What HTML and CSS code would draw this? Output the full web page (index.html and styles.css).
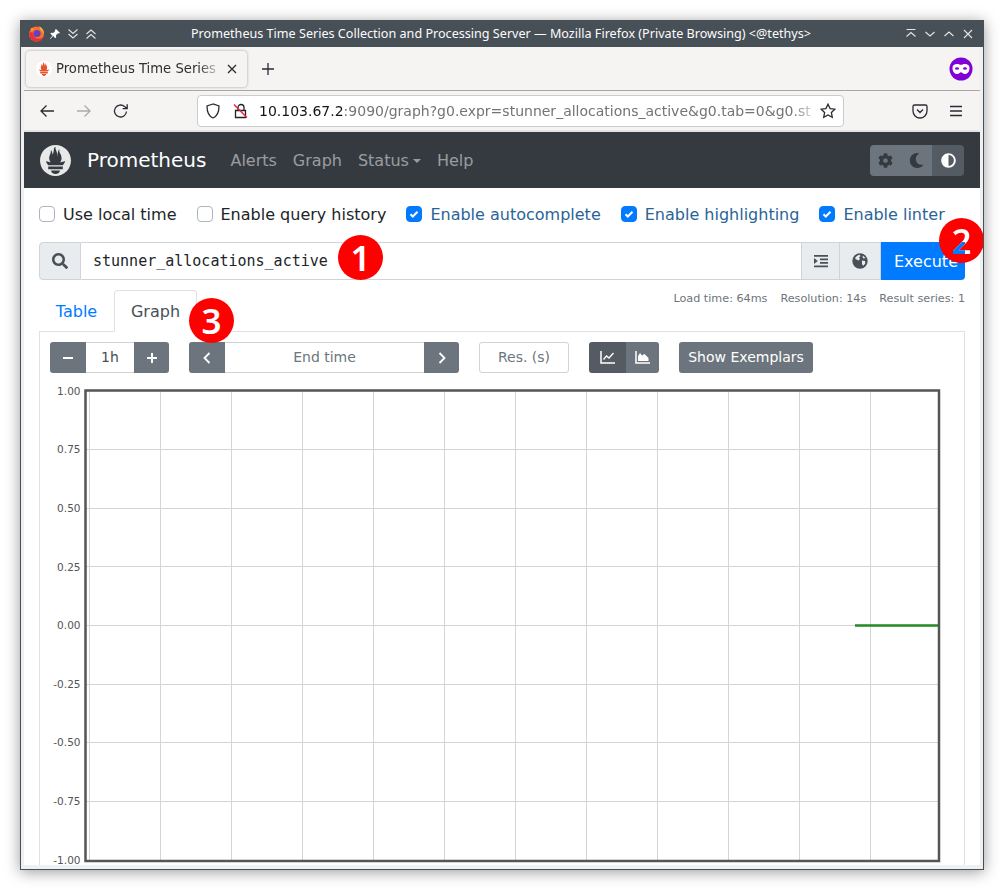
FILE: index.html
```html
<!DOCTYPE html>
<html>
<head>
  <title>Prometheus Time Series Collection and Processing Server</title>
  <link rel="stylesheet" href="styles.css">
</head>
<body>
  <div class="window">
    <!-- window manager title bar -->
    <div class="titlebar">
      <div class="title-left">
        <svg class="ff-logo" width="17" height="17" viewBox="0 0 17 17">
          <circle cx="8.500" cy="9" r="7.500" fill="#f7722a"/>
          <path d="M10.500.8c3.500 1.700 6 4.800 5.500 9-.7-2.500-2-4.200-3.800-5 .1-1.600-.6-3-1.700-4z" fill="#fbb03b"/>
          <path d="M2.500 3.500C3.500 3 4.500 3 5.500 3.500L4 6z" fill="#fbb03b"/>
          <path d="M1 8c.2 4.500 3.300 8.500 7.500 8.500 3.400 0 6-2 7-5-2 2.300-5.300 2.800-7.500 1.400S4.800 9.800 4.500 6.800z" fill="#e8303d"/>
          <circle cx="9" cy="8.500" r="3.600" fill="#6a3dc2"/>
        </svg>
        <svg width="12" height="12" viewBox="0 0 12 12"><path d="M7 1l4 4-1 .6-1-.3-2 2 .2 2-.9.9-2.200-2.200L1.500 11 1 10.500l2.500-2.700L1.300 5.600l.9-.9 2 .2 2-2-.3-1z" fill="#fff"/></svg>
        <svg class="wm-icon" width="12" height="12" viewBox="0 0 12 12"><path d="M1.500 1.500L6 5.500l4.500-4M1.500 6L6 10l4.500-4"/></svg>
        <svg class="wm-icon" width="12" height="12" viewBox="0 0 12 12"><path d="M1.500 6L6 2l4.500 4M1.500 10.500L6 6.500l4.500 4"/></svg>
      </div>
      <div class="title-text">Prometheus Time Series Collection and Processing Server — Mozilla Firefox (Private Browsing) &lt;@tethys&gt;</div>
      <div class="title-right">
        <svg class="wm-icon" width="12" height="12" viewBox="0 0 12 12"><path d="M1.500 1.500h9M1.500 8.500L6 4.500l4.500 4"/></svg>
        <svg class="wm-icon" width="12" height="12" viewBox="0 0 12 12"><path d="M1.500 4L6 8l4.500-4"/></svg>
        <svg class="wm-icon" width="12" height="12" viewBox="0 0 12 12"><path d="M1.500 8L6 4l4.500 4"/></svg>
        <svg class="wm-icon" width="12" height="12" viewBox="0 0 12 12"><path d="M2 2l8 8M10 2l-8 8"/></svg>
      </div>
    </div>

    <div class="browser">
      <!-- firefox tab strip -->
      <div class="tabstrip">
        <div class="ff-tab">
          <svg class="favicon" width="16" height="16" viewBox="0 0 256 256"><circle cx="128" cy="128" r="128" fill="#fff"/><path fill="#e6522c" d="M67.900 177.800h120.400v21.800H67.900zM91.700 209.600h72.900c0 16.600-16.400 30-36.500 30s-36.400-13.400-36.400-30zM187.900 166.500H68.200c-12.900-15-15.800-23.500-19.200-32.100 0 0 25.400 7 39.100 8.200-7.700-9-12.300-20.500-12.300-32.200 0-25.800 19.800-48.400 12.700-66.600 6.900.6 14.300 14.600 14.800 36.500 7.400-10.200 10.500-28.900 10.500-40.300 0-11.800 7.800-25.600 15.600-26-7 11.500 1.800 21.300 9.600 45.800 2.900 9.200 2.600 24.700 4.900 34.500.8-20.400 4.300-50.200 17.200-60.500-5.700 13 .8 29.200 5.300 37 7.200 12.500 11.500 22 11.500 39.900 0 12-4.400 23.300-11.900 32.100 13-2.400 41.900-8.400 41.900-8.400s-4 16.400-19.300 32.100z"/></svg>
          <span class="ff-tab-label">Prometheus Time Series C</span>
          <svg class="ff-icon tab-close" width="10" height="10" viewBox="0 0 10 10"><path d="M1 1l8 8M9 1l-8 8"/></svg>
        </div>
        <svg class="ff-icon new-tab" width="12" height="12" viewBox="0 0 12 12"><path d="M6 0v12M0 6h12"/></svg>
        <svg class="private-mask" width="24" height="24" viewBox="0 0 24 24">
          <circle cx="12" cy="12" r="11.500" fill="#8000d7"/>
          <path d="M3.500 11c0-3 2-4 4.500-4 1.800 0 3 .8 4 .8s2.200-.8 4-.8c2.500 0 4.500 1 4.500 4 0 3.500-2 6-4.500 6-2 0-2.800-1.800-4-1.800S10 17 8 17c-2.500 0-4.500-2.500-4.500-6z" fill="#fff"/>
          <ellipse cx="8" cy="11.500" rx="2" ry="1.200" fill="#8000d7"/>
          <ellipse cx="16" cy="11.500" rx="2" ry="1.200" fill="#8000d7"/>
        </svg>
      </div>

      <!-- firefox nav bar -->
      <div class="navbar">
        <svg class="ff-icon nav-btn" width="16" height="16" viewBox="0 0 16 16"><path d="M15 8H2M7.500 2.500L2 8l5.500 5.500"/></svg>
        <svg class="ff-icon nav-btn off" width="16" height="16" viewBox="0 0 16 16"><path d="M1 8h13M8.500 2.500L14 8l-5.500 5.500"/></svg>
        <svg class="ff-icon nav-btn" width="16" height="16" viewBox="0 0 16 16"><path d="M13.500 8.500a6 6 0 1 1-2-5L14 5.500M14.200 1.200v4.500H9.700"/></svg>
        <div class="urlbar">
          <svg class="ff-icon" width="16" height="16" viewBox="0 0 16 16"><path d="M8 1L2 3c0 6 1 10 6 12 5-2 6-6 6-12z"/></svg>
          <svg class="url-lock" width="16" height="16" viewBox="0 0 16 16"><path d="M5 7V4.500a3 3 0 0 1 6 0V7M2.500 7.500h10v7h-10z" fill="none" stroke="#222" stroke-width="1.300"/><path d="M1 1.500l13 13" stroke="#e22850" stroke-width="1.500"/></svg>
          <div class="url-text"><span class="url-host">10.103.67.2</span>:9090/graph?g0.expr=stunner_allocations_active&amp;g0.tab=0&amp;g0.st</div>
          <svg class="ff-icon" width="16" height="16" viewBox="0 0 16 16"><path d="M8 1.200l2.100 4.400 4.700.6-3.400 3.300.9 4.800L8 12l-4.300 2.300.9-4.800L1.200 6.200l4.700-.6z"/></svg>
        </div>
        <svg class="ff-icon pocket" width="16" height="16" viewBox="0 0 16 16"><path d="M2.500 2h11A1.500 1.500 0 0 1 15 3.500V8a7 7 0 0 1-14 0V3.500A1.500 1.500 0 0 1 2.500 2zM5 6.500l3 3 3-3"/></svg>
        <svg class="ff-icon" width="14" height="12" viewBox="0 0 14 12"><path d="M1 1.500h12M1 6h12M1 10.500h12"/></svg>
      </div>

      <!-- prometheus page -->
      <div class="page">
        <nav class="prom-nav">
          <svg class="prom-logo" width="31" height="31" viewBox="0 0 256 256"><path fill="#e8e8e8" fill-rule="evenodd" d="M128 0C57.300 0 0 57.300 0 128s57.300 128 128 128 128-57.300 128-128S198.800 0 128 0zm.100 239.600c-20.100 0-36.400-13.400-36.400-30h72.900c0 16.600-16.400 30-36.500 30zm60.200-40H67.900v-21.800h120.400zm-.4-33.100H68.200c-12.900-15-15.800-23.500-19.200-32.100 0 0 25.400 7 39.100 8.200-7.700-9-12.300-20.500-12.300-32.200 0-25.800 19.800-48.400 12.700-66.600 6.900.6 14.300 14.600 14.800 36.500 7.400-10.200 10.500-28.900 10.500-40.300 0-11.800 7.800-25.600 15.600-26-7 11.500 1.800 21.300 9.600 45.800 2.900 9.200 2.600 24.700 4.900 34.500.8-20.400 4.300-50.200 17.200-60.500-5.700 13 .8 29.200 5.300 37 7.200 12.500 11.500 22 11.500 39.900 0 12-4.400 23.300-11.900 32.100 13-2.400 41.900-8.400 41.900-8.400s-4 16.400-19.300 32.100z"/></svg>
          <a class="brand">Prometheus</a>
          <a class="nav-link">Alerts</a>
          <a class="nav-link">Graph</a>
          <a class="nav-link">Status<span class="caret"></span></a>
          <a class="nav-link">Help</a>
          <div class="theme-toggle">
            <div class="theme-btn"><svg class="fa dark" width="15" height="15" viewBox="0 0 512 512"><path d="M487.400 315.700l-42.600-24.600c4.300-23.200 4.300-47 0-70.200l42.600-24.600c4.900-2.800 7.100-8.600 5.500-14-11.100-35.600-30-67.800-54.700-94.600-3.800-4.100-10-5.100-14.800-2.300L380.800 110c-17.900-15.400-38.500-27.300-60.800-35.100V25.800c0-5.600-3.900-10.500-9.400-11.700-36.700-8.200-74.300-7.800-109.200 0-5.500 1.200-9.400 6.100-9.400 11.700V75c-22.200 7.900-42.800 19.800-60.800 35.100L88.700 85.500c-4.900-2.800-11-1.900-14.800 2.300-24.700 26.700-43.600 58.900-54.700 94.600-1.700 5.400.6 11.200 5.500 14L67.300 221c-4.300 23.200-4.300 47 0 70.200l-42.600 24.600c-4.900 2.800-7.100 8.600-5.500 14 11.100 35.600 30 67.800 54.700 94.600 3.800 4.100 10 5.100 14.800 2.300l42.600-24.600c17.900 15.400 38.500 27.300 60.800 35.100v49.200c0 5.600 3.900 10.500 9.400 11.700 36.700 8.200 74.300 7.800 109.200 0 5.500-1.200 9.400-6.100 9.400-11.700v-49.200c22.200-7.900 42.800-19.800 60.800-35.100l42.600 24.600c4.900 2.800 11 1.900 14.800-2.300 24.700-26.700 43.600-58.900 54.700-94.600 1.500-5.500-.7-11.300-5.600-14.100zM256 336c-44.100 0-80-35.900-80-80s35.900-80 80-80 80 35.900 80 80-35.900 80-80 80z"/></svg></div>
            <div class="theme-btn"><svg class="fa dark" width="15" height="15" viewBox="0 0 512 512"><path d="M283.200 512c79 0 151.100-35.900 198.900-94.800 7.100-8.700-.6-21.400-11.600-19.300-124.200 23.600-238.300-71.600-238.300-197 0-72.200 38.700-138.600 101.500-174.400 9.700-5.500 7.300-20.200-3.800-22.200A258.200 258.200 0 0 0 283.200 0c-141.300 0-256 114.500-256 256 0 141.300 114.500 256 256 256z"/></svg></div>
            <div class="theme-btn active"><svg class="fa" width="15" height="15" viewBox="0 0 512 512"><path d="M8 256c0 137 111 248 248 248s248-111 248-248S393 8 256 8 8 119 8 256zm248 184V72c101.700 0 184 82.300 184 184 0 101.700-82.300 184-184 184z"/></svg></div>
          </div>
        </nav>

        <div class="options">
          <label class="opt"><span class="check"></span>Use local time</label>
          <label class="opt"><span class="check"></span>Enable query history</label>
          <label class="opt on"><span class="check"><svg width="10" height="10" viewBox="0 0 10 10"><path d="M1.500 5.200l2.300 2.300 4.700-4.700" fill="none" stroke="#fff" stroke-width="2"/></svg></span>Enable autocomplete</label>
          <label class="opt on"><span class="check"><svg width="10" height="10" viewBox="0 0 10 10"><path d="M1.500 5.200l2.300 2.300 4.700-4.700" fill="none" stroke="#fff" stroke-width="2"/></svg></span>Enable highlighting</label>
          <label class="opt on"><span class="check"><svg width="10" height="10" viewBox="0 0 10 10"><path d="M1.500 5.200l2.300 2.300 4.700-4.700" fill="none" stroke="#fff" stroke-width="2"/></svg></span>Enable linter</label>
        </div>

        <div class="expr-group">
          <div class="addon search"><svg class="fa grey" width="16" height="16" viewBox="0 0 512 512"><path d="M505 442.700L405.300 343c-4.500-4.500-10.600-7-17-7H372c27.600-35.300 44-79.700 44-128C416 93.100 322.900 0 208 0S0 93.100 0 208s93.100 208 208 208c48.300 0 92.700-16.400 128-44v16.300c0 6.400 2.500 12.500 7 17l99.700 99.700c9.400 9.400 24.600 9.400 33.900 0l28.300-28.300c9.400-9.400 9.400-24.600.1-34zM208 336c-70.700 0-128-57.200-128-128 0-70.700 57.200-128 128-128 70.700 0 128 57.200 128 128 0 70.700-57.200 128-128 128z"/></svg></div>
          <div class="expr-input">stunner_allocations_active</div>
          <div class="addon fmt"><svg class="fa grey" width="14" height="14" viewBox="0 0 14 14"><path d="M0 1h14v1.700H0zM6 4.500h8v1.700H6zM6 8h8v1.700H6zM0 11.500h14v1.700H0zM0 4l3.800 3L0 10z"/></svg></div>
          <div class="addon globe"><svg width="16" height="16" viewBox="0 0 16 16"><circle cx="8" cy="8" r="7.700" fill="#495057"/><path d="M3 5.500c1-2 2.500-3.200 4.500-3.700L8.500 3 7 4.500 8 6 6.500 7.500 4.500 6.500zM10 7.500l3 .5.300 2.500-2 2.300-1.300-1.500zM11 2.800L13.500 5 11.500 5.500 10.500 4z" fill="#e9ecef"/></svg></div>
          <button class="execute">Execute</button>
        </div>

        <div class="tabs">
          <a class="tab">Table</a>
          <a class="tab active">Graph</a>
          <div class="result-stats">
            <span>Load time: 64ms</span>
            <span>Resolution: 14s</span>
            <span>Result series: 1</span>
          </div>
        </div>

        <div class="pane">
          <div class="controls">
            <div class="ctl-group">
              <button class="btn square"><svg width="12" height="12" viewBox="0 0 12 12"><path d="M1 6h10" stroke="#fff" stroke-width="2"/></svg></button>
              <div class="ctl-input range">1h</div>
              <button class="btn square wee"><svg width="12" height="12" viewBox="0 0 12 12"><path d="M1 6h10M6 1v10" stroke="#fff" stroke-width="2"/></svg></button>
            </div>
            <div class="ctl-group">
              <button class="btn square"><svg width="10" height="14" viewBox="0 0 10 14"><path d="M7.500 2L2.500 7l5 5" fill="none" stroke="#fff" stroke-width="1.800"/></svg></button>
              <div class="ctl-input endtime">End time</div>
              <button class="btn square wee"><svg width="10" height="14" viewBox="0 0 10 14"><path d="M2.500 2l5 5-5 5" fill="none" stroke="#fff" stroke-width="1.800"/></svg></button>
            </div>
            <div class="ctl-input res">Res. (s)</div>
            <div class="ctl-group">
              <button class="btn stack-on"><svg width="15" height="13" viewBox="0 0 15 13"><path d="M1 0v12h14" fill="none" stroke="#fff" stroke-width="1.500"/><path d="M3.500 8.500L6.500 5l2.500 2 4.500-5" fill="none" stroke="#fff" stroke-width="1.300"/></svg></button>
              <button class="btn stack-off"><svg width="15" height="13" viewBox="0 0 15 13"><path d="M1 0v12h14" fill="none" stroke="#fff" stroke-width="1.500"/><path d="M3 10V5l2-3 2 2.500L9.500 3l4 4v3z" fill="#fff"/></svg></button>
            </div>
            <button class="btn exemplars">Show Exemplars</button>
          </div>

          <svg class="graph" width="924" height="492" viewBox="0 0 924 492">
            <g class="grid">
              <path d="M49.500 17v471M120.500 17v471M191.500 17v471M262.500 17v471M333.500 17v471M404.500 17v471M475.500 17v471M546.500 17v471M617.500 17v471M688.500 17v471M759.500 17v471M830.500 17v471"/>
              <path d="M46 76.500h854M46 135.500h854M46 193.500h854M46 252.500h854M46 311.500h854M46 369.500h854M46 428.500h854"/>
            </g>
            <path class="series" d="M815 252.500h84"/>
            <rect class="plot-box" x="45.500" y="17.500" width="853.500" height="470.500"/>
            <g class="ticks">
              <text x="40.500" y="22">1.00</text>
              <text x="40.500" y="80">0.75</text>
              <text x="40.500" y="139">0.50</text>
              <text x="40.500" y="198">0.25</text>
              <text x="40.500" y="256">0.00</text>
              <text x="40.500" y="315">-0.25</text>
              <text x="40.500" y="373">-0.50</text>
              <text x="40.500" y="432">-0.75</text>
              <text x="40.500" y="491">-1.00</text>
            </g>
          </svg>
        </div>
      </div>
    </div>

    <!-- numbered callouts on top of the screenshot -->
    <div class="callout one"><span class="digit">1</span></div>
    <div class="callout two"><span class="digit">2</span></div>
    <div class="callout three"><span class="digit">3</span></div>
  </div>
</body>
</html>
```

FILE: styles.css
```css
* {
  box-sizing: border-box;
}

body {
  margin: 0;
  padding: 20px;
  background: #fff;
  font-family: "DejaVu Sans", sans-serif;
  overflow: hidden;
}

svg {
  display: block;
  flex: none;
}

.window {
  position: relative;
  width: 964px;
  height: 850px;
  border: 1px solid #474f57;
  border-top: 0;
  background: #eff0f1;
  box-shadow: 0 2px 14px rgba(0, 0, 0, 0.4);
  overflow: hidden;
}

/* title bar */
.titlebar {
  display: flex;
  align-items: center;
  height: 27px;
  padding: 0 9px 0 7px;
  background: #474f57;
  color: #fcfcfc;
}

.title-left,
.title-right {
  display: flex;
  align-items: center;
  gap: 7px;
  width: 71px;
}

.title-left {
  gap: 6px;
}

.title-right {
  justify-content: flex-end;
}

.title-text {
  flex: 1;
  text-align: center;
  font-family: "Noto Sans", sans-serif;
  font-size: 12.600px;
  white-space: nowrap;
}

.ff-logo {
  margin-right: -2px;
}

.wm-icon path {
  fill: none;
  stroke: #e4e6e8;
  stroke-width: 1.100;
}

/* firefox chrome */
.browser {
  height: 819px;
  margin: 0 3px;
  overflow: hidden;
}

.tabstrip {
  display: flex;
  align-items: center;
  height: 44px;
  padding: 0 7px 0 2px;
  background: #f5f4f2;
  border-bottom: 1px solid #a8a7a5;
}

.ff-tab {
  display: flex;
  align-items: center;
  width: 221px;
  height: 36px;
  padding: 0 10px;
  background: #f5f4f2;
  border-radius: 4px;
  box-shadow: 0 0 3px rgba(0, 0, 0, 0.35);
}

.ff-tab-label {
  flex: 1;
  margin-left: 4px;
  overflow: hidden;
  white-space: nowrap;
  font-size: 13.200px;
  color: #2f2f33;
  -webkit-mask-image: linear-gradient(to right, #000 86%, transparent 100%);
  mask-image: linear-gradient(to right, #000 86%, transparent 100%);
}

.ff-icon {
  fill: none;
  stroke: #2b2a33;
  stroke-width: 1.300;
}

.tab-close {
  margin-left: 5px;
}

.new-tab {
  margin-left: 15px;
}

.private-mask {
  margin-left: auto;
}

.navbar {
  display: flex;
  align-items: center;
  height: 39px;
  padding: 0 17px 0 15px;
  background: #f5f4f2;
}

.nav-btn {
  margin-right: 21px;
}

.nav-btn.off {
  stroke: #a9a9ac;
}

.urlbar {
  display: flex;
  align-items: center;
  width: 647px;
  height: 32px;
  margin-left: 47px;
  padding: 0 7px;
  background: #fff;
  border: 1px solid #ccc;
  border-radius: 4px;
}

.url-lock {
  margin-left: 12px;
}

.url-text {
  flex: 1;
  margin-left: 10px;
  font-size: 14px;
  color: #737378;
  white-space: nowrap;
  overflow: hidden;
  -webkit-mask-image: linear-gradient(to right, #000 95%, transparent 100%);
  mask-image: linear-gradient(to right, #000 95%, transparent 100%);
}

.url-host {
  color: #15141a;
}

.pocket {
  margin: 0 21px 0 auto;
}

/* prometheus navbar */
.page {
  height: 735px;
  background: #fff;
  border-top: 2px solid #e5e5e5;
  overflow: hidden;
}

.prom-nav {
  display: flex;
  align-items: center;
  height: 56px;
  padding: 0 16px;
  background: #343a40;
}

.brand {
  margin: 0 24px 0 16px;
  font-size: 20px;
  color: #fff;
}

.nav-link {
  margin-right: 16px;
  font-size: 16px;
  color: rgba(255, 255, 255, 0.5);
}

.caret {
  display: inline-block;
  margin-left: 4px;
  vertical-align: 3px;
  border-top: 4.800px solid;
  border-left: 4.800px solid transparent;
  border-right: 4.800px solid transparent;
}

.theme-toggle {
  display: flex;
  margin-left: auto;
  border-radius: 4px;
  overflow: hidden;
}

.theme-btn {
  display: flex;
  align-items: center;
  justify-content: center;
  width: 31px;
  height: 31px;
  background: #6c757d;
}

.theme-btn.active {
  width: 32px;
  background: #545b62;
}

.fa {
  fill: #fff;
}

.fa.dark {
  fill: #343a40;
}

.fa.grey {
  fill: #495057;
}

/* checkboxes */
.options {
  display: flex;
  gap: 20px;
  height: 54px;
  padding: 14px 15px 0;
}

.opt {
  display: flex;
  align-items: center;
  height: 24px;
  font-size: 16px;
  color: #212529;
}

.opt.on {
  color: #2a6496;
}

.check {
  display: flex;
  align-items: center;
  justify-content: center;
  width: 16px;
  height: 16px;
  margin-right: 8px;
  background: #fff;
  border: 1px solid #adb5bd;
  border-radius: 4px;
}

.opt.on .check {
  background: #007bff;
  border-color: #007bff;
}

/* expression row */
.expr-group {
  display: flex;
  height: 38px;
  margin: 0 15px 10px;
}

.addon {
  display: flex;
  align-items: center;
  justify-content: center;
  background: #e9ecef;
  border: 1px solid #ced4da;
}

.addon.search {
  width: 42px;
  border-radius: 4px 0 0 4px;
}

.addon.fmt {
  width: 39px;
}

.addon.globe {
  width: 41px;
  border-left: 0;
}

.expr-input {
  flex: 1;
  display: flex;
  align-items: center;
  padding-left: 12px;
  border-top: 1px solid #ced4da;
  border-bottom: 1px solid #ced4da;
  font-family: "DejaVu Sans Mono", monospace;
  font-size: 15px;
  color: #212529;
}

.execute {
  width: 84px;
  padding: 0 0 0 13px;
  border: 0;
  border-radius: 0 4px 4px 0;
  background: #007bff;
  color: #fff;
  font-family: inherit;
  font-size: 16px;
  text-align: left;
}

/* tabs, with the query stats on the same row */
.tabs {
  display: flex;
  height: 42px;
  margin: 0 15px;
  border-bottom: 1px solid #dee2e6;
}

.tab {
  display: flex;
  align-items: center;
  justify-content: center;
  width: 75px;
  height: 42px;
  font-size: 16px;
  color: #007bff;
}

.tab.active {
  width: 83px;
  background: #fff;
  border: 1px solid #dee2e6;
  border-bottom-color: #fff;
  border-radius: 4px 4px 0 0;
  color: #495057;
}

.result-stats {
  display: flex;
  gap: 13px;
  margin-left: auto;
  font-size: 11.200px;
  line-height: 18px;
  color: #6c757d;
}

.pane {
  height: 540px;
  margin: 0 15px;
  padding-top: 10px;
  border-left: 1px solid #dee2e6;
  border-right: 1px solid #dee2e6;
}

/* graph controls */
.controls {
  display: flex;
  gap: 20px;
  height: 31px;
  padding-left: 10px;
}

.ctl-group {
  display: flex;
}

.btn {
  display: flex;
  align-items: center;
  justify-content: center;
  height: 31px;
  padding: 0;
  border: 0;
  background: #6c757d;
  color: #fff;
  font-family: inherit;
  font-size: 14px;
}

.btn.square {
  width: 36px;
}

.btn.square.wee {
  width: 35px;
}

.ctl-group .btn:first-child {
  border-radius: 3px 0 0 3px;
}

.ctl-group .btn:last-child {
  border-radius: 0 3px 3px 0;
}

.ctl-input {
  display: flex;
  align-items: center;
  justify-content: center;
  height: 31px;
  padding-bottom: 1px;
  background: #fff;
  border: 1px solid #ced4da;
  font-size: 14px;
  color: #6c757d;
}

.ctl-input.range {
  width: 48px;
  border-left: 0;
  border-right: 0;
  color: #495057;
}

.ctl-input.endtime {
  width: 199px;
  border-left: 0;
  border-right: 0;
}

.ctl-input.res {
  width: 90px;
  border-radius: 3px;
}

.btn.stack-on {
  width: 37px;
  background: #545b62;
}

.btn.stack-off {
  width: 33px;
}

.btn.exemplars {
  width: 134px;
  padding-bottom: 1px;
  border-radius: 3px;
}

/* plot */
.grid path {
  fill: none;
  stroke: #d4d4d4;
  stroke-width: 1;
}

.series {
  fill: none;
  stroke: #228b22;
  stroke-width: 2.500;
}

.plot-box {
  fill: none;
  stroke: #555;
  stroke-width: 2.500;
}

.ticks text {
  font-size: 10.500px;
  fill: #545454;
  text-anchor: end;
}

/* numbered callouts */
.callout {
  position: absolute;
  width: 45px;
  height: 45px;
  border-radius: 50%;
  background: #f00;
}

.digit {
  display: flex;
  align-items: center;
  justify-content: center;
  height: 100%;
  color: #fff;
  font-family: "Noto Sans", sans-serif;
  font-size: 35px;
  font-weight: 600;
  line-height: 1;
}

.callout.one {
  left: 317px;
  top: 215px;
}

.callout.two {
  left: 918px;
  top: 198px;
}

.callout.three {
  left: 168px;
  top: 278px;
}

.callout.two .digit {
  color: transparent;
  background: linear-gradient(#007bff, #007bff) 0 24px / 26px 21px no-repeat, #fff;
  -webkit-background-clip: text;
  background-clip: text;
}
```
